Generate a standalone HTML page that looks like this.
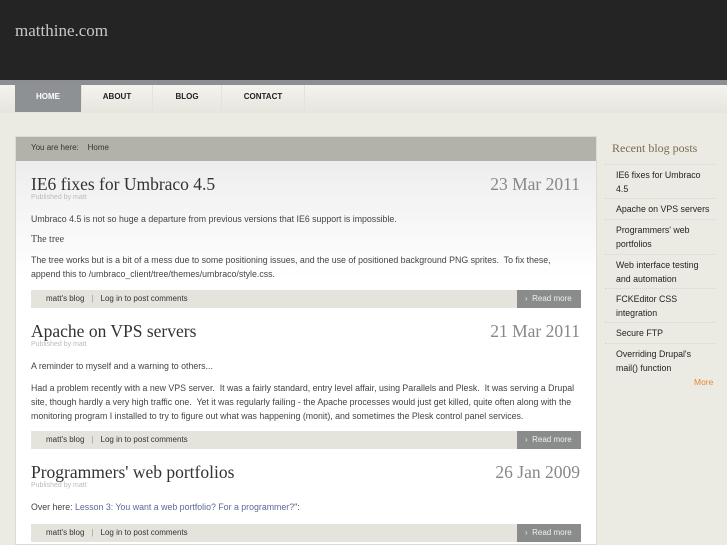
<!DOCTYPE html>
<html><head><style>
*{margin:0;padding:0;box-sizing:border-box}
body{width:727px;height:545px;overflow:hidden;background:#ecebe3;font-family:"Liberation Sans",sans-serif;position:relative}
.a{position:absolute}
.hdr{left:0;top:0;width:727px;height:80px;background:#242424}
.logo{left:15px;top:21px;font:17px "Liberation Serif",serif;color:#c8c8c4}
.line{left:0;top:80px;width:727px;height:5px;background:#8c8e92}
.nav{left:0;top:85px;width:727px;height:28px;background:linear-gradient(#f4f3ee,#e6e5de)}
.tab{top:85px;height:27px;font:bold 8px "Liberation Sans",sans-serif;color:#222;text-align:center;line-height:23px;border-right:1px solid #e4e3db}
.main{left:15px;top:136px;width:582px;height:409px;background:linear-gradient(#eaeaea 0,#fff 140px,#fff);border:1px solid #dcdbd3}
.bc{left:16px;top:137px;width:580px;height:24px;background:#b3b2a8;font-size:8px;color:#333;line-height:22px;padding-left:15px}
h2{position:absolute;left:31px;font:normal 17.5px "Liberation Serif",serif;color:#333}
.date{position:absolute;right:147px;font:17.5px "Liberation Serif",serif;color:#888}
.pub{position:absolute;left:31px;font-size:7px;color:#bbb}
p{position:absolute;left:31px;font-size:8.8px;color:#444;line-height:14px;white-space:nowrap}
.ft{left:31px;width:550px;height:18px;background:#e5e4dc;font-size:8px;color:#333;line-height:17px;padding-left:15px}
.ft span{color:#999;margin:0 7px}
.rm{right:146px;width:64px;height:18px;background:#8a8c8c;color:#eee;font-size:8px;line-height:17px;padding-left:8px}
.sh{left:612px;top:141px;font:12px "Liberation Serif",serif;color:#7a6a50}
.li{left:605px;width:110px;font-size:8.8px;color:#222;line-height:14px;padding-left:11px;border-top:1px dotted #d8d7cf}
</style></head><body>
<div class="a hdr"></div><div class="a logo">matthine.com</div>
<div class="a line"></div><div class="a nav"></div>
<div class="a tab" style="left:15px;width:67px;background:#8e9194;color:#fff">HOME</div>
<div class="a tab" style="left:82px;width:71px">ABOUT</div>
<div class="a tab" style="left:153px;width:69px">BLOG</div>
<div class="a tab" style="left:222px;width:83px">CONTACT</div>
<div class="a main"></div>
<div class="a bc">You are here:&nbsp;&nbsp;&nbsp;&nbsp;Home</div>

<h2 style="top:174px">IE6 fixes for Umbraco 4.5</h2><div class="date" style="top:174px">23 Mar 2011</div>
<div class="pub" style="top:194px">Published by matt</div>
<p style="top:212px">Umbraco 4.5 is not so huge a departure from previous versions that IE6 support is impossible.</p>
<p style="top:234px;font:10px 'Liberation Serif',serif;color:#444">The tree</p>
<p style="top:253px">The tree works but is a bit of a mess due to some positioning issues, and the use of positioned background PNG sprites.&nbsp; To fix these,<br>append this to /umbraco_client/tree/themes/umbraco/style.css.</p>
<div class="a ft" style="top:290px">matt's blog<span>|</span>Log in to post comments</div><div class="a rm" style="top:290px">›&nbsp;&nbsp;Read more</div>

<h2 style="top:321px">Apache on VPS servers</h2><div class="date" style="top:321px">21 Mar 2011</div>
<div class="pub" style="top:341px">Published by matt</div>
<p style="top:359px">A reminder to myself and a warning to others...</p>
<p style="top:381px">Had a problem recently with a new VPS server.&nbsp; It was a fairly standard, entry level affair, using Parallels and Plesk.&nbsp; It was serving a Drupal<br>site, though hardly a very high traffic one.&nbsp; Yet it was regularly failing - the Apache processes would just get killed, quite often along with the<br>monitoring program I installed to try to figure out what was happening (monit), and sometimes the Plesk control panel services.</p>
<div class="a ft" style="top:431px">matt's blog<span>|</span>Log in to post comments</div><div class="a rm" style="top:431px">›&nbsp;&nbsp;Read more</div>

<h2 style="top:462px">Programmers' web portfolios</h2><div class="date" style="top:462px">26 Jan 2009</div>
<div class="pub" style="top:482px">Published by matt</div>
<p style="top:500px">Over here: <span style="color:#5a6a9a">Lesson 3: You want a web portfolio? For a programmer?</span>":</p>
<div class="a ft" style="top:524px">matt's blog<span>|</span>Log in to post comments</div><div class="a rm" style="top:524px">›&nbsp;&nbsp;Read more</div>

<div class="a sh">Recent blog posts</div>
<div class="a li" style="top:164px;padding-top:3px;padding-right:12px">IE6 fixes for Umbraco 4.5</div>
<div class="a li" style="top:198px;padding-top:3px">Apache on VPS servers</div>
<div class="a li" style="top:219px;padding-top:3px;padding-right:12px">Programmers' web portfolios</div>
<div class="a li" style="top:254px;padding-top:3px">Web interface testing and automation</div>
<div class="a li" style="top:288px;padding-top:3px;padding-right:20px">FCKEditor CSS integration</div>
<div class="a li" style="top:322px;padding-top:3px">Secure FTP</div>
<div class="a li" style="top:343px;padding-top:3px">Overriding Drupal's mail() function</div>
<div class="a" style="left:694px;top:377px;font-size:8.5px;color:#e08a3a">More</div>
</body></html>
